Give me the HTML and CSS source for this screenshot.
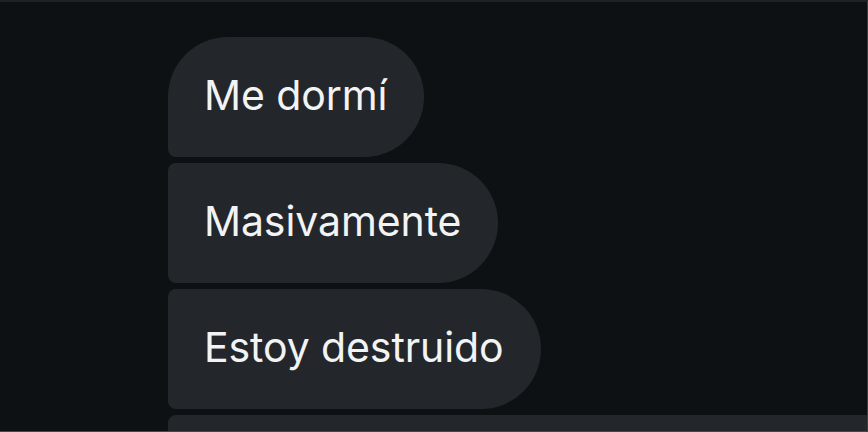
FILE: index.html
```html
<!DOCTYPE html>
<html lang="es">
<head>
    <meta charset="UTF-8">
    <meta name="viewport" content="width=device-width, initial-scale=1.0">
    <title>Mensajes</title>
    <link rel="stylesheet" href="styles.css">
</head>
<body>
    <div class="screen">
        <div class="thread">
            <div class="bubble first">Me dormí</div>
            <div class="bubble">Masivamente</div>
            <div class="bubble">Estoy destruido</div>
            <div class="bubble last"></div>
        </div>
    </div>
</body>
</html>
```

FILE: styles.css
```css
body {
    margin: 0;
    background-color: #0d1114;
    font-family: 'Inter', 'Roboto', sans-serif;
    overflow: hidden;
}

.screen {
    height: 432px;
    box-sizing: border-box;
    border-top: 2px solid #1e2225;
    border-bottom: 1px solid #44484b;
    border-right: 1px solid #3a3e41;
    overflow: hidden;
}

.thread {
    display: flex;
    flex-direction: column;
    align-items: flex-start;
    gap: 6px;
    padding: 35px 0 0 168px;
}

.bubble {
    display: flex;
    align-items: center;
    height: 120px;
    box-sizing: border-box;
    padding: 0 37px 4px 36px;
    background-color: #23272b;
    color: #f2f3f4;
    font-size: 41px;
    line-height: 1;
    letter-spacing: -0.1px;
    border-radius: 8px 60px 60px 8px;
}

.bubble.first {
    border-radius: 60px 60px 60px 8px;
}

.bubble.last {
    align-self: stretch;
    border-radius: 8px 0 0 8px;
}
```
